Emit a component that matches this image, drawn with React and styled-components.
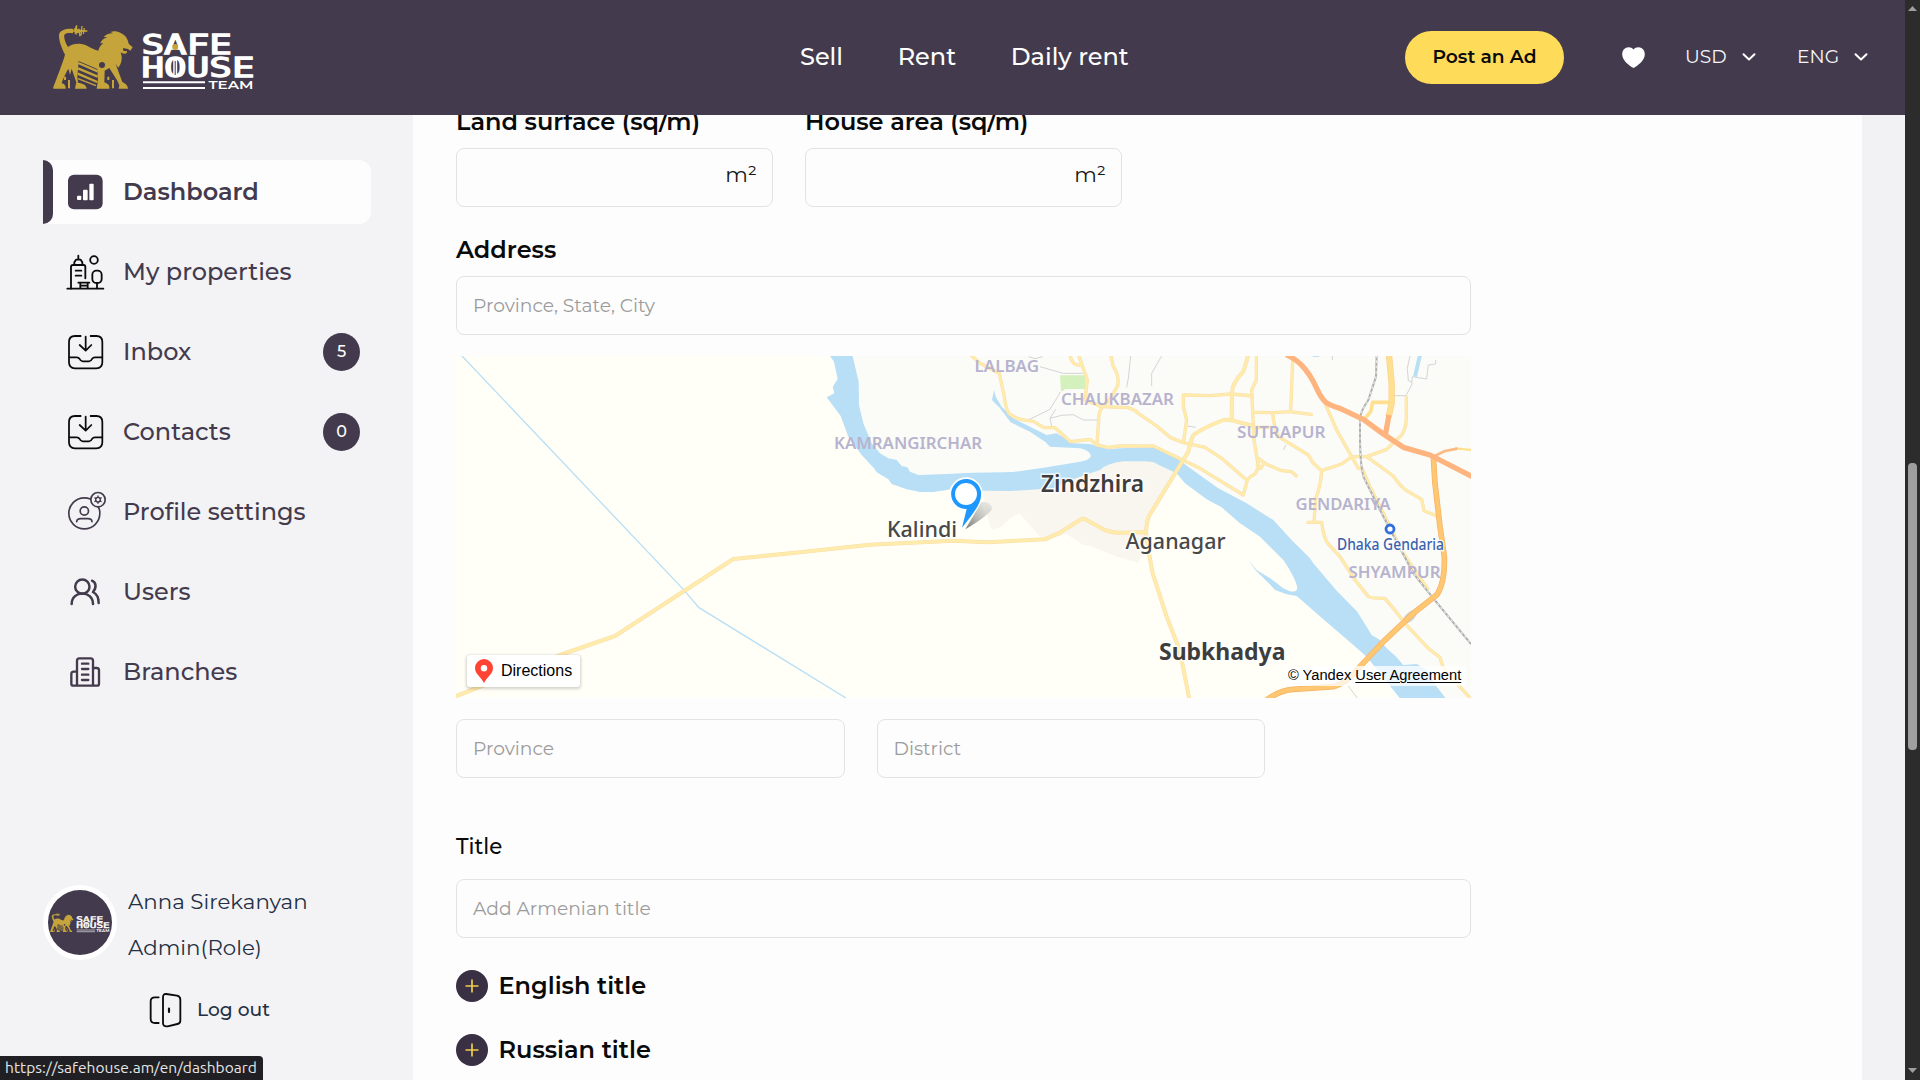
import React from "react";
import styled, { createGlobalStyle, css } from "styled-components";

const INK = "#433b4d";
const GOLD = "#c5a53b";

const GlobalStyle = createGlobalStyle`
  * { box-sizing: border-box; }
  html, body { margin: 0; padding: 0; overflow: hidden; }
  body { font-family: Montserrat, Inter, sans-serif; background: #fdfdfd; }
  h2, p, ul { margin: 0; padding: 0; font-weight: inherit; list-style: none; }
  svg { display: block; flex: none; overflow: visible; }
`;

/* ---------- shell ---------- */

const Screen = styled.div`
  display: flex;
  width: 1920px;
  height: 1080px;
  overflow: hidden;
`;

const Site = styled.div`
  position: relative;
  display: flex;
  flex-direction: column;
  width: 1905px;
  height: 100%;
`;

const Body = styled.div`
  display: flex;
  flex: 1;
  min-height: 0;
`;

const ScrollTrack = styled.div`
  display: flex;
  flex-direction: column;
  align-items: center;
  justify-content: space-between;
  width: 15px;
  height: 100%;
  padding: 6px 0 7px;
  background: #2c2c2c;
`;

const ScrollThumb = styled.div`
  width: 9px;
  height: 287px;
  margin: 452px 0 auto;
  border-radius: 4px;
  background: #9f9f9f;
`;

/* ---------- header ---------- */

const Header = styled.header`
  display: flex;
  align-items: center;
  height: 115px;
  padding: 0 37px 0 53px;
  background: ${INK};
  color: #fff;
`;

const Nav = styled.nav`
  display: flex;
  gap: 54.7px;
  margin-left: 545px;
  padding-bottom: 2px;
  font-size: 24px;
  font-weight: 500;
  line-height: 30px;
  white-space: nowrap;
`;

const Actions = styled.div`
  display: flex;
  align-items: center;
  margin-left: auto;
`;

const PostButton = styled.button`
  width: 159px;
  height: 53px;
  margin-right: 58px;
  padding: 0 0 3px;
  border: 0;
  border-radius: 27px;
  background: #ffdb5a;
  color: #0a0a0a;
  font: 600 18.67px Montserrat, Inter, sans-serif;
  white-space: nowrap;
`;

const Select = styled.div`
  display: flex;
  align-items: center;
  justify-content: space-between;
  width: 71px;
  margin-left: ${(p) => p.$gap}px;
  padding-bottom: 2px;
  font-size: 18.67px;
  line-height: 24px;
  color: #f6f5f7;
`;

/* ---------- sidebar ---------- */

const Sidebar = styled.aside`
  display: flex;
  flex-direction: column;
  width: 413px;
  padding: 45px 42px 0 43px;
  background: #f3f3f5;
`;

const Menu = styled.ul`
  display: flex;
  flex-direction: column;
  gap: 16px;
`;

const MenuItem = styled.li`
  display: flex;
  align-items: center;
  height: 64px;
  padding: 0 11px 0 24px;
  border-radius: 0 12px 12px 0;
  color: ${INK};
  font-size: 24px;
  font-weight: 500;
  white-space: nowrap;
  ${(p) =>
    p.$active &&
    css`
      padding-left: 0;
      background: #fdfdfd;
      font-weight: 600;
    `}
`;

const ActiveBar = styled.span`
  width: 10px;
  height: 64px;
  margin-right: 14px;
  border-radius: 0 10px 10px 0;
  background: ${INK};
`;

const MenuLabel = styled.span`
  flex: 1;
  margin-left: 18px;
  line-height: 30px;
`;

const Badge = styled.span`
  display: flex;
  align-items: center;
  justify-content: center;
  width: 37px;
  height: 38px;
  padding-bottom: 2px;
  border-radius: 50%;
  background: ${INK};
  color: #fff;
  font-size: 16px;
`;

const Profile = styled.div`
  display: flex;
  align-items: center;
  gap: 11px;
  height: 75px;
  margin-top: 181px;
  color: #233044;
`;

const Avatar = styled.div`
  display: flex;
  align-items: center;
  justify-content: center;
  width: 74px;
  height: 75px;
  border: 5px solid #fff;
  border-radius: 50%;
  background: ${INK};
`;

const ProfileText = styled.p`
  font-size: 21.33px;
  line-height: 46px;
  white-space: nowrap;
`;

const ProfileLines = styled.div`
  padding-top: 3px;
`;

const Logout = styled.div`
  display: flex;
  align-items: center;
  gap: 15px;
  height: 36px;
  margin: 32px 0 0 106px;
  color: #233044;
  font-size: 18.67px;
  font-weight: 500;
  line-height: 36px;
`;

const StatusBar = styled.div`
  position: absolute;
  left: 0;
  bottom: 0;
  width: 263px;
  height: 24px;
  padding-left: 5px;
  border-top-right-radius: 4px;
  background: #202024;
  color: #e6e6e6;
  font: 15.5px/24px Ubuntu, "Noto Sans", sans-serif;
  letter-spacing: 0.04px;
  white-space: nowrap;
`;

/* ---------- form ---------- */

const Main = styled.main`
  flex: 1;
  padding-left: 43px;
  overflow: hidden;
  background: #fdfdfd;
`;

const Gutter = styled.div`
  width: 43px;
  background: #f2f2f5;
`;

const Form = styled.div`
  display: flex;
  flex-direction: column;
  width: 1015px;
  margin-top: -8px;
`;

const Row = styled.div`
  display: flex;
  gap: 32px;
  margin-top: ${(p) => p.$top || 0}px;
`;

const Field = styled.div`
  display: flex;
  flex-direction: column;
  gap: ${(p) => p.$gap || 11}px;
  margin-top: ${(p) => p.$top || 0}px;
  width: ${(p) => p.$width || 1015}px;
`;

const FieldTitle = styled.h2`
  height: 30px;
  color: #0a0a0a;
  font-size: ${(p) => p.$size || 24}px;
  font-weight: ${(p) => p.$weight || 600};
  line-height: 30px;
  white-space: nowrap;
`;

const InputBox = styled.div`
  display: flex;
  align-items: center;
  justify-content: ${(p) => (p.$end ? "flex-end" : "flex-start")};
  width: ${(p) => p.$width || 1015}px;
  height: 59px;
  padding: 0 15px 1px 16px;
  border: 1px solid #e3e3e3;
  border-radius: 8px;
  background: #fdfdfd;
  color: #9b9b9b;
  font-size: 18.67px;
`;

const Unit = styled.span`
  padding-bottom: 7px;
  color: #161616;
  font-size: 21.33px;
`;

const Expander = styled.div`
  display: flex;
  align-items: center;
  gap: 10.5px;
  height: 32px;
  margin-top: 32px;
  color: #0a0a0a;
  font-size: 24px;
  font-weight: 600;
  line-height: 30px;
`;

const ExpanderLabel = styled.span`
  padding-bottom: 1px;
`;

/* ---------- map ---------- */

const MapFrame = styled.div`
  position: relative;
  width: 1015px;
  height: 342px;
  margin-top: 21px;
  overflow: hidden;
`;

const DirectionsButton = styled.div`
  position: absolute;
  left: 11px;
  bottom: 11px;
  display: flex;
  align-items: center;
  gap: 7px;
  width: 113px;
  height: 32px;
  padding-left: 8px;
  border-radius: 3px;
  background: #fff;
  box-shadow: 0 1px 3px 1px rgba(0, 0, 0, 0.18);
  color: #000;
  font: 16px "Liberation Sans", Arial, sans-serif;
`;

const Copyright = styled.div`
  position: absolute;
  right: 5px;
  bottom: 12px;
  width: 183px;
  height: 20px;
  padding-left: 5px;
  border-radius: 3px;
  background: rgba(255, 255, 255, 0.75);
  color: #000;
  font: 14.67px/18px "Liberation Sans", Arial, sans-serif;
  white-space: nowrap;
`;

const Terms = styled.span`
  text-decoration: underline;
  text-underline-offset: 2px;
`;

const MapLabel = styled.text`
  font-family: "Noto Sans", sans-serif;
  font-size: ${(p) => p.$size}px;
  font-weight: ${(p) => p.$weight};
  fill: ${(p) => p.$color};
  stroke: rgba(255, 255, 255, 0.75);
  stroke-width: ${(p) => p.$halo || 0}px;
  paint-order: stroke;
`;

/* ---------- drawings ---------- */

const LogoText = styled.text`
  font-family: "DejaVu Sans Mono", monospace;
  font-weight: 400;
  fill: #fff;
  stroke: #fff;
  stroke-width: 1.3px;
`;

const TeamText = styled.text`
  font-family: Montserrat, Inter, sans-serif;
  font-weight: 600;
  fill: #fff;
`;

function Logo({ width = 202 }) {
  return (
    <svg width={width} height={(width * 66) / 202} viewBox="53 25 202 66">
      <g transform="scale(0.33333)">
        <path
          fill={GOLD}
          d="M220 87C200 85 179 91 177 104C176 120 184 142 195 164C188 190 176 218 169 238L160 261V266H197C198 256 192 252 185 249C190 233 199 216 205 206L210 224L215 206L229 247L225 266H260C259 254 248 250 234 248L232 230L236 183L292 207L294 240L290 266H328C330 254 320 250 313 247L314 212L328 204L352 242L358 256L356 266H384C383 254 374 250 367 246L347 192L355 203C364 192 366 180 365 169L362 157C366 160 372 163 380 160L381 153L370 153L369 144L384 147L391 152L398 142L386 131C383 116 377 106 362 99C352 93 341 92 331 96L340 100C328 99 317 104 311 111L322 112C311 115 304 122 301 130L310 130C302 135 297 143 295 152C282 150 268 141 258 136C240 129 219 130 204 141C196 128 191 112 193 105C197 98 207 98 219 100Z"
        />
        <path
          stroke={GOLD}
          strokeWidth="4"
          fill="none"
          d="M218 93H262M226 87L230 76L228 104M236 86L240 109M246 78L243 106M253 84L250 102"
        />
        <path fill={GOLD} d="M222 85L260 93L224 101Z" />
        <path
          stroke={GOLD}
          strokeWidth="7"
          fill="none"
          d="M235 189L293 214M234 205L293 230M233 221L292 246"
        />
        <path stroke={GOLD} strokeWidth="4" fill="none" d="M234 236L288 257" />
        <path fill={GOLD} d="M192 230h6v10h-6zM204 240h6v25h-6zM322 230h6v10h-6zM336 240h6v25h-6z" />
        <circle cx="306" cy="195" r="9" fill={INK} />
      </g>
      <LogoText x="141.5" y="54" fontSize="26" textLength="90.5" lengthAdjust="spacingAndGlyphs">
        SAFE
      </LogoText>
      <LogoText x="141.5" y="77" fontSize="26" textLength="113" lengthAdjust="spacingAndGlyphs">
        HOUSE
      </LogoText>
      <path stroke="#fff" strokeWidth="4" d="M175.200 59V76" />
      <path stroke={INK} strokeWidth="1" d="M175.200 61V75" />
      <circle cx="175.200" cy="47" r="3" fill={GOLD} />
      <path stroke="#fff" strokeWidth="2" d="M143 82.300H205M143 88H205" />
      <TeamText x="208.500" y="89" fontSize="10.500" textLength="45" lengthAdjust="spacingAndGlyphs">
        TEAM
      </TeamText>
    </svg>
  );
}

const lineIcon = { fill: "none", strokeLinecap: "round", strokeLinejoin: "round" };

function DashboardIcon() {
  return (
    <svg width="38" height="38" viewBox="201 520 114 114">
      <rect x="204" y="525" width="104" height="104" rx="18" fill={INK} />
      <g fill="#fdfdfd">
        <rect x="231" y="588" width="13" height="13" rx="3" />
        <rect x="249" y="570" width="14" height="32" rx="3" />
        <rect x="268" y="552" width="13" height="50" rx="3" />
      </g>
    </svg>
  );
}

function PropertiesIcon() {
  return (
    <svg width="38" height="38" viewBox="81 69 114 114">
      <g {...lineIcon} stroke="#0b0b0b" strokeWidth="5.500">
        <path d="M93 176V111Q93 105 99 105H131Q136 105 136 111V145" />
        <path d="M103 104V97L108 89H122L127 97V104M115 77V88M107 122H124M107 137H124" />
        <path d="M82 176H190M115 158H148M121 158V174M143 158V174M121 167H143" />
        <rect x="157" y="122" width="28" height="37" rx="12" />
        <path d="M171 160V175" />
        <circle cx="162" cy="90" r="11.500" />
      </g>
    </svg>
  );
}

function InboxIcon() {
  return (
    <svg width="38" height="38" viewBox="81 309 114 114">
      <g {...lineIcon} stroke="#0b0b0b" strokeWidth="5.300">
        <path d="M122 318H105Q87 318 87 336V397Q87 415 105 415H169Q187 415 187 397V336Q187 318 169 318H152" />
        <path d="M137 320V360M119 345L137 362L154 345" />
        <path d="M88 382H110Q116 382 119 387Q122 394 128 394H147Q153 394 156 387Q159 382 165 382H186" />
      </g>
    </svg>
  );
}

function ProfileIcon() {
  return (
    <svg width="38" height="38" viewBox="81 69 114 114">
      <g {...lineIcon} stroke={INK} strokeWidth="5">
        <circle cx="133" cy="130" r="46.500" />
        <circle cx="133" cy="123" r="12.500" />
        <path d="M110 155Q111 146 122 146H144Q155 146 156 155" />
        <circle cx="174" cy="89" r="21.500" fill="#f3f3f5" />
        <circle cx="174" cy="89" r="7" strokeWidth="4" />
        <path strokeWidth="4" d="M174 78V82M174 96V100M164.500 83.500L168 85.500M180 92.500L183.500 94.500M164.500 94.500L168 92.500M180 85.500L183.500 83.500" />
      </g>
    </svg>
  );
}

function UsersIcon() {
  return (
    <svg width="38" height="38" viewBox="81 309 114 114">
      <g {...lineIcon} stroke={INK} strokeWidth="7.500">
        <circle cx="127" cy="350" r="21.500" />
        <path d="M95 402C95 360 159 360 159 402" />
        <path d="M156 332C169 337 170 354 159 366C171 372 176 384 176 399" />
      </g>
    </svg>
  );
}

function BranchesIcon() {
  return (
    <svg width="38" height="38" viewBox="81 549 114 114">
      <g {...lineIcon} stroke={INK} strokeWidth="7">
        <path d="M111 645V572Q111 565 118 565H152Q159 565 159 572V645" />
        <path d="M110 605H101Q94 605 94 612V641Q94 647 101 647H170Q177 647 177 641V601Q177 594 170 594H161" />
        <path d="M126 581H145M126 597H145M126 614H145M126 630H145" />
      </g>
    </svg>
  );
}

function LogoutIcon() {
  return (
    <svg width="33" height="36" viewBox="447 396 99 108">
      <g {...lineIcon} stroke="#0b0b0b" strokeWidth="5.500">
        <path d="M476 412H465Q452 412 452 424V477Q452 489 465 489H476" />
        <path d="M499 402L531 407Q541 409 541 419V482Q541 490 532 492L503 499Q489 501 489 489V412Q489 401 499 402Z" />
        <path strokeWidth="6.500" d="M507 446V456" />
      </g>
    </svg>
  );
}

function Heart() {
  return (
    <svg width="23" height="21" viewBox="0 0 23 21">
      <path fill="#fff" d="M11.500 2.500C13.500 0 17 -.4 19.800 1.200C22.500 2.900 23.300 6.300 22.500 9.500C21.300 14 16.500 18.300 11.500 21C6.500 18.300 1.700 14 .5 9.500C-.3 6.300 .5 2.900 3.200 1.200C6 -.4 9.500 0 11.500 2.500Z" />
    </svg>
  );
}

function Chevron() {
  return (
    <svg width="14" height="9" viewBox="0 0 14 9">
      <path {...lineIcon} stroke="#fff" strokeWidth="2" d="M1.500 2.200L7 7.500L12.500 2.200" />
    </svg>
  );
}

function Plus() {
  return (
    <svg width="32" height="32" viewBox="0 0 32 32">
      <circle cx="16" cy="16" r="16" fill="#393043" />
      <path stroke="#f0cd4f" strokeWidth="1.700" d="M9.500 16H22.500M16 9.500V22.500" />
    </svg>
  );
}

function Arrow({ down }) {
  return (
    <svg width="9" height="5" viewBox="0 0 9 5">
      <path fill="#9f9f9f" d={down ? "M0 0H9L4.500 5Z" : "M0 5H9L4.500 0Z"} />
    </svg>
  );
}

/* Road network. Coordinates are tile units, three to a pixel; the second
   list belongs to the eastern tile, which starts 1050 units to the right. */
const LIGHT = "#ffecaa";
const westRoads = [
  [7, "M512 45L540 70L598 100L612 165Q618 215 630 223Q650 240 700 244L732 263H765L812 305L870 298L890 315L925 322L960 318H1060L1200 385L1330 465L1342 420Q1350 408 1365 402L1375 383L1372 360L1362 300L1358 215L1355 150L1369 120V45"],
  [7, "M810 45Q815 70 830 75H843M836 45L862 120L855 180L905 200L985 203Q1005 210 1015 220L1070 258L1110 292L1150 308L1215 322L1265 355L1340 420"],
  [7, "M932 45L940 80Q960 110 952 140L925 185Q898 205 897 225L891 312"],
];
const eastRoads = [
  [7, "M100 310L110 240L100 200V165L180 167L245 162L308 168"],
  [9, "M295 45L280 95Q245 130 246 160L245 240"],
  [7, "M310 217L370 218L420 215L488 224M428 60L422 215M368 218Q372 265 385 290L475 345L490 370L515 392L575 372L605 350H650L710 328L755 285Q768 265 769 235V168M310 262H358"],
  [7, "M525 190L560 270L605 350L625 385L637 387L660 440L710 540L760 640L835 750"],
  [7, "M650 350L730 408Q755 445 775 455L815 478L822 512L858 527"],
  [7, "M515 392Q512 440 497 475L492 547M470 547H515Q522 600 535 612L570 650L615 720L655 770Q660 775 705 775L730 805L765 850L835 925L870 952L880 985L960 1074"],
  [7, "M322 380L325 355L343 368L332 385L322 380M343 370L395 392L425 395L442 410"],
];

function Roads({ list }) {
  return (
    <g fill="none" strokeLinejoin="round">
      {list.map(([w, d]) => (
        <path key={d} d={d} stroke="#fbdcae" strokeWidth={w + 3} />
      ))}
      {list.map(([w, d]) => (
        <path key={d} d={d} stroke={LIGHT} strokeWidth={w} />
      ))}
    </g>
  );
}

const mainRoads = [
  [9, "M-1035 1070L-720 945L-555 888L-200 657L0 637L210 614L460 602L560 607L735 598L780 578L835 543Q850 530 865 543L910 568Q930 577 960 578L1038 577"],
  [9, "M1038 577Q1040 545 1047 528L1165 335Q1172 300 1180 286Q1200 268 1270 240Q1290 238 1310 245L1360 258"],
  [9, "M1038 577L1047 640L1058 700L1100 830L1135 920L1150 985L1168 1078"],
];

const labels = [
  ["LALBAG", 974.5, 372, 64.5, 15.5, 600, "#b7b3cf"],
  ["CHAUKBAZAR", 1061, 405, 113, 15.5, 600, "#b7b3cf"],
  ["KAMRANGIRCHAR", 834, 448.5, 148, 15.5, 600, "#b7b3cf"],
  ["SUTRAPUR", 1237, 438, 88.5, 15.5, 600, "#b7b3cf"],
  ["GENDARIYA", 1295.5, 509.5, 95, 15.5, 600, "#b7b3cf"],
  ["SHYAMPUR", 1348.5, 578, 92, 15.5, 600, "#b7b3cf"],
  ["Dhaka Gendaria", 1337, 549.5, 107, 15.3, 500, "#3b62ae", 3],
  ["Kalindi", 887, 537, 70, 22.5, 500, "#484848", 3],
  ["Zindzhira", 1041, 491.5, 103, 23, 600, "#3d3d3d", 3],
  ["Aganagar", 1125.5, 548.5, 100, 22.5, 500, "#484848", 3],
  ["Subkhadya", 1159, 659.5, 126.5, 23.5, 700, "#3d3d3d", 3],
];

function CityMap() {
  return (
    <svg width="1015" height="342" viewBox="456 356 1015 342">
      <defs>
        <linearGradient id="pinShade" x1="0" y1="1" x2="1" y2="0">
          <stop offset="0" stopColor="#555" stopOpacity="0.8" />
          <stop offset="1" stopColor="#999" stopOpacity="0.1" />
        </linearGradient>
      </defs>
      <rect x="456" y="356" width="1015" height="342" fill="#fffff7" />
      <g transform="translate(800 340) scale(0.33333)">
        <path fill="#fbfcf7" d="M120 45L140 250L250 390L340 430L640 425L800 400L1000 340L1130 370L1250 470L1480 640L1750 960L1860 1080H2020V45Z" />
        <path fill="#f9f6f0" d="M545 445L565 540L575 570L605 560L630 535L658 520L715 585L735 600L800 582L850 615L872 618L950 650L1015 668L1035 620L1045 530L1130 400L1030 350L935 360L760 435Z" />
        <path fill="#b9dff6" d="M88 45L102 65L113 117L98 140L103 160L80 172L122 228L145 290L185 345L222 385L230 397L265 418L275 432L320 448L360 456H400L455 448L560 452L632 453L760 445L800 425L840 410L900 390Q920 370 970 364H1030Q1060 364 1075 374L1130 400L1155 430L1220 478L1265 502L1320 550L1380 590L1410 620L1450 660Q1490 720 1492 745Q1490 758 1470 754L1450 745L1415 718L1370 690L1345 660L1368 692L1405 728L1425 750L1460 763L1490 768L1570 838L1660 915L1700 950L1740 1000L1802 1078H1940L1910 1040L1880 990L1850 972L1810 975L1790 952L1760 925L1740 900L1715 885L1672 815L1610 752L1540 670L1530 655L1475 600L1420 540L1340 490L1255 445L1175 388L1130 355L1060 322L960 325L925 328L870 312L820 310L770 280L740 285L705 268L640 235L605 200L588 172L582 150L576 180L600 205L632 247L690 275L735 305L750 320L840 325Q870 332 873 348Q870 360 840 365L740 382L640 396L520 398L440 402L355 405L330 395L322 382L305 378L290 360L265 355L240 340L215 310L190 250L177 195L176 125L157 45Z" />
        <path fill="#d3f0bd" d="M780 106H855V147H793V152H783Z" />
        <path fill="none" stroke="#b9dff6" strokeWidth="4" d="M-1014 48L-350 748L-303 803L138 1074" />
        <path fill="none" stroke="#d3d4d6" strokeWidth="3" d="M720 80L790 100H850M782 155L750 208L685 240M767 208L750 235L755 258M750 235L785 226L820 224L850 240H895M992 48L985 115L980 142M1085 48L1055 100V138M685 50L705 56L728 50" />
        <g transform="translate(1050 0)">
          <path fill="none" stroke="#b9dff6" strokeWidth="12" d="M810 45L795 110" />
          <path fill="none" stroke="#b9dff6" strokeWidth="5" d="M488 48H508" />
          <path fill="none" stroke="#d3d4d6" strokeWidth="3" d="M730 167H768L785 135L787 110L830 117L835 75L857 72V60M780 48L772 85L775 122L785 126M113 258L137 262M408 315L400 330M595 1038L622 1074M547 48V60" />
          <ellipse cx="780" cy="830" rx="26" ry="13" fill="#d3d4d6" transform="rotate(-42 780 830)" />
        </g>
        <Roads list={westRoads} />
        <g transform="translate(1050 0)">
          <Roads list={eastRoads} />
          <g fill="none" strokeLinejoin="round">
            <path stroke="#aeaeae" strokeWidth="6" d="M680 45L678 110L655 180Q630 215 630 240V300Q632 400 645 420L690 510L720 568L790 700L850 775L963 912" />
            <path stroke="#e8e8e8" strokeWidth="3.500" strokeDasharray="8 8" d="M680 45L678 110L655 180Q630 215 630 240V300Q632 400 645 420L690 510L720 568L790 700L850 775L963 912" />
            <path stroke="#ffe08e" strokeWidth="11" d="M725 187H668L662 215L645 235" />
            <path stroke="#fbd292" strokeWidth="19" d="M717 45L725 130V190L716 230" />
            <path stroke="#ffe08e" strokeWidth="15" d="M717 45L725 130V190L716 230" />
            <path stroke="#ffe08e" strokeWidth="7" d="M915 325L965 330" />
            <path stroke="#fcb983" strokeWidth="8" d="M850 350L885 333L922 326" />
            <path stroke="#f4b265" strokeWidth="17" d="M850 350L855 430L870 560L883 650Q885 730 860 765L790 820L700 905L625 985Q590 1030 550 1040L430 1048Q390 1050 350 1080" />
            <path stroke="#ffc772" strokeWidth="13" d="M850 350L855 430L870 560L883 650Q885 730 860 765L790 820L700 905L625 985Q590 1030 550 1040L430 1048Q390 1050 350 1080" />
            <path stroke="#ffe08e" strokeWidth="5" d="M340 45H410" />
            <path stroke="#feb47e" strokeWidth="16" d="M408 44C440 58 470 80 500 145C520 188 530 193 570 205L640 238L700 282L760 322L840 345L967 410M717 225L706 285" />
          </g>
        </g>
        <Roads list={mainRoads} />
        <path fill="url(#pinShade)" d="M496 568L545 485Q575 485 577 507Q560 530 496 568Z" />
        <path fill="#fff" d="M498 412A50 50 0 1 0 498 512A50 50 0 0 0 498 412Z" />
        <path fill="#1e98ff" d="M486 563L500 507A45 45 0 1 1 543 468C542 492 520 520 486 563Z" />
        <circle cx="498" cy="462" r="33" fill="#fff" />
      </g>
      {labels.map(([t, x, y, w, size, weight, color, halo]) => (
        <MapLabel key={t} x={x} y={y} textLength={w} lengthAdjust="spacingAndGlyphs" $size={size} $weight={weight} $color={color} $halo={halo}>
          {t}
        </MapLabel>
      ))}
      <circle cx="1390" cy="529" r="4" fill="#fff" stroke="#2f6fe0" strokeWidth="2.800" />
    </svg>
  );
}

function RedPin() {
  return (
    <svg width="19" height="24" viewBox="0 0 19 24">
      <path fill="#ff4433" d="M9 0A9 9 0 0 1 18 9C18 15 12.200 17.500 9 24C5.700 17.500 0 15 0 9A9 9 0 0 1 9 0Z" />
      <circle cx="9" cy="9.300" r="3.200" fill="#fff" />
    </svg>
  );
}

const menu = [
  { label: "Dashboard", Icon: DashboardIcon, active: true },
  { label: "My properties", Icon: PropertiesIcon },
  { label: "Inbox", Icon: InboxIcon, count: "5" },
  { label: "Contacts", Icon: InboxIcon, count: "0" },
  { label: "Profile settings", Icon: ProfileIcon },
  { label: "Users", Icon: UsersIcon },
  { label: "Branches", Icon: BranchesIcon },
];

export default function App() {
  return (
    <Screen>
      <GlobalStyle />
      <Site>
        <Header>
          <Logo />
          <Nav>
            <span>Sell</span>
            <span>Rent</span>
            <span>Daily rent</span>
          </Nav>
          <Actions>
            <PostButton>Post an Ad</PostButton>
            <Heart />
            <Select $gap={40}>
              USD <Chevron />
            </Select>
            <Select $gap={41}>
              ENG <Chevron />
            </Select>
          </Actions>
        </Header>
        <Body>
          <Sidebar>
            <Menu>
              {menu.map(({ label, Icon, active, count }) => (
                <MenuItem key={label} $active={active}>
                  {active && <ActiveBar />}
                  <Icon />
                  <MenuLabel>{label}</MenuLabel>
                  {count && <Badge>{count}</Badge>}
                </MenuItem>
              ))}
            </Menu>
            <Profile>
              <Avatar>
                <Logo width={60} />
              </Avatar>
              <ProfileLines>
                <ProfileText>Anna Sirekanyan</ProfileText>
                <ProfileText>Admin(Role)</ProfileText>
              </ProfileLines>
            </Profile>
            <Logout>
              <LogoutIcon />
              Log out
            </Logout>
          </Sidebar>
          <Main>
            <Form>
              <Row>
                <Field $width={317}>
                  <FieldTitle>Land surface (sq/m)</FieldTitle>
                  <InputBox $width={317} $end>
                    <Unit>m²</Unit>
                  </InputBox>
                </Field>
                <Field $width={317}>
                  <FieldTitle>House area (sq/m)</FieldTitle>
                  <InputBox $width={317} $end>
                    <Unit>m²</Unit>
                  </InputBox>
                </Field>
              </Row>
              <Field $top={28}>
                <FieldTitle>Address</FieldTitle>
                <InputBox>Province, State, City</InputBox>
              </Field>
              <MapFrame>
                <CityMap />
                <DirectionsButton>
                  <RedPin />
                  Directions
                </DirectionsButton>
                <Copyright>
                  © Yandex <Terms>User Agreement</Terms>
                </Copyright>
              </MapFrame>
              <Row $top={21}>
                <InputBox $width={388.5}>Province</InputBox>
                <InputBox $width={388.5}>District</InputBox>
              </Row>
              <Field $top={53} $gap={18}>
                <FieldTitle $size={21.33} $weight={500}>
                  Title
                </FieldTitle>
                <InputBox>Add Armenian title</InputBox>
              </Field>
              <Expander>
                <Plus />
                <ExpanderLabel>English title</ExpanderLabel>
              </Expander>
              <Expander>
                <Plus />
                <ExpanderLabel>Russian title</ExpanderLabel>
              </Expander>
            </Form>
          </Main>
          <Gutter />
        </Body>
        <StatusBar>https://safehouse.am/en/dashboard</StatusBar>
      </Site>
      <ScrollTrack>
        <Arrow />
        <ScrollThumb />
        <Arrow down />
      </ScrollTrack>
    </Screen>
  );
}
